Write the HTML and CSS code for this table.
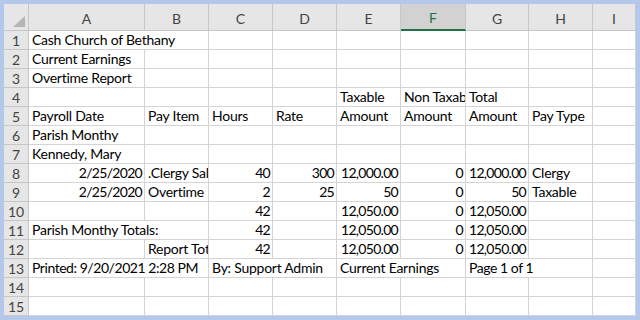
FILE: index.html
```html
<!DOCTYPE html>
<html>
<head>
<meta charset="utf-8">
<link rel="stylesheet" href="styles.css">
</head>
<body>
<div class="frame">
<div class="sheet">
  <div class="hd corner"><div class="tri"></div></div>
  <div class="hd col">A</div><div class="hd col">B</div><div class="hd col">C</div><div class="hd col">D</div><div class="hd col">E</div><div class="hd col sel">F</div><div class="hd col">G</div><div class="hd col">H</div><div class="hd col">I</div>

  <div class="hd rn">1</div><div class="c s2">Cash Church of Bethany</div><div class="c"></div><div class="c"></div><div class="c"></div><div class="c"></div><div class="c"></div><div class="c"></div><div class="c"></div>
  <div class="hd rn">2</div><div class="c">Current Earnings</div><div class="c"></div><div class="c"></div><div class="c"></div><div class="c"></div><div class="c"></div><div class="c"></div><div class="c"></div><div class="c"></div>
  <div class="hd rn">3</div><div class="c">Overtime Report</div><div class="c"></div><div class="c"></div><div class="c"></div><div class="c"></div><div class="c"></div><div class="c"></div><div class="c"></div><div class="c"></div>
  <div class="hd rn">4</div><div class="c"></div><div class="c"></div><div class="c"></div><div class="c"></div><div class="c">Taxable</div><div class="c">Non Taxable</div><div class="c">Total</div><div class="c"></div><div class="c"></div>
  <div class="hd rn">5</div><div class="c">Payroll Date</div><div class="c">Pay Item</div><div class="c">Hours</div><div class="c">Rate</div><div class="c">Amount</div><div class="c">Amount</div><div class="c">Amount</div><div class="c">Pay Type</div><div class="c"></div>
  <div class="hd rn">6</div><div class="c">Parish Monthy</div><div class="c"></div><div class="c"></div><div class="c"></div><div class="c"></div><div class="c"></div><div class="c"></div><div class="c"></div><div class="c"></div>
  <div class="hd rn">7</div><div class="c">Kennedy, Mary</div><div class="c"></div><div class="c"></div><div class="c"></div><div class="c"></div><div class="c"></div><div class="c"></div><div class="c"></div><div class="c"></div>
  <div class="hd rn">8</div><div class="c r">2/25/2020</div><div class="c">.Clergy Salary</div><div class="c r">40</div><div class="c r">300</div><div class="c r">12,000.00</div><div class="c r">0</div><div class="c r">12,000.00</div><div class="c">Clergy</div><div class="c"></div>
  <div class="hd rn">9</div><div class="c r">2/25/2020</div><div class="c">Overtime</div><div class="c r">2</div><div class="c r">25</div><div class="c r">50</div><div class="c r">0</div><div class="c r">50</div><div class="c">Taxable</div><div class="c"></div>
  <div class="hd rn">10</div><div class="c"></div><div class="c"></div><div class="c r">42</div><div class="c"></div><div class="c r">12,050.00</div><div class="c r">0</div><div class="c r">12,050.00</div><div class="c"></div><div class="c"></div>
  <div class="hd rn">11</div><div class="c s2">Parish Monthy Totals:</div><div class="c r">42</div><div class="c"></div><div class="c r">12,050.00</div><div class="c r">0</div><div class="c r">12,050.00</div><div class="c"></div><div class="c"></div>
  <div class="hd rn">12</div><div class="c"></div><div class="c">Report Totals:</div><div class="c r">42</div><div class="c"></div><div class="c r">12,050.00</div><div class="c r">0</div><div class="c r">12,050.00</div><div class="c"></div><div class="c"></div>
  <div class="hd rn">13</div><div class="c s2 n">Printed: 9/20/2021 2:28 PM</div><div class="c s2">By: Support Admin</div><div class="c s2">Current Earnings</div><div class="c s2 n">Page 1 of 1</div><div class="c"></div>
  <div class="hd rn">14</div><div class="c"></div><div class="c"></div><div class="c"></div><div class="c"></div><div class="c"></div><div class="c"></div><div class="c"></div><div class="c"></div><div class="c"></div>
  <div class="hd rn">15</div><div class="c"></div><div class="c"></div><div class="c"></div><div class="c"></div><div class="c"></div><div class="c"></div><div class="c"></div><div class="c"></div><div class="c"></div>
</div>
</div>
</body>
</html>
```

FILE: styles.css
```css
html, body {
  margin: 0;
  padding: 0;
  background: #b4c8ec;
}
.frame {
  width: 640px;
  height: 320px;
  box-sizing: border-box;
  padding: 4px;
}
.sheet {
  display: grid;
  grid-template-columns: 25px 116px 64px 64px 64px 64px 65px 63px 64px 43px;
  grid-template-rows: 27px repeat(15, 19px);
  background: #ffffff;
  font-family: Lato, "Open Sans", sans-serif;
  font-size: 14px;
  color: #000;
  overflow: hidden;
}
.c {
  box-sizing: border-box;
  border-right: 1px solid #d4d4d4;
  border-bottom: 1px solid #d4d4d4;
  white-space: nowrap;
  overflow: hidden;
  display: flex;
  align-items: flex-end;
  padding: 0 2px 1px 3px;
  line-height: 17px;
  letter-spacing: -0.25px;
}
.r {
  justify-content: flex-end;
  letter-spacing: -0.7px;
  padding-right: 2px;
}
.n {
  letter-spacing: -0.45px;
}
.s2 {
  grid-column: span 2;
}
.hd {
  box-sizing: border-box;
  background: #e6e6e6;
  border-right: 1px solid #c6c6c6;
  border-bottom: 1px solid #c6c6c6;
  color: #444444;
  display: flex;
  align-items: center;
  justify-content: center;
  white-space: nowrap;
}
.col {
  padding-top: 2px;
}
.rn {
  background: #e6e6e6;
  color: #444444;
}
.sel {
  background: #d2d2d2;
  color: #217346;
  border-bottom: 2px solid #217346;
}
.corner {
  align-items: flex-end;
  justify-content: flex-end;
  padding: 0 3px 3px 0;
}
.tri {
  width: 12px;
  height: 11px;
  background: #b4b4b4;
  clip-path: polygon(100% 0, 100% 100%, 0 100%);
}
```
